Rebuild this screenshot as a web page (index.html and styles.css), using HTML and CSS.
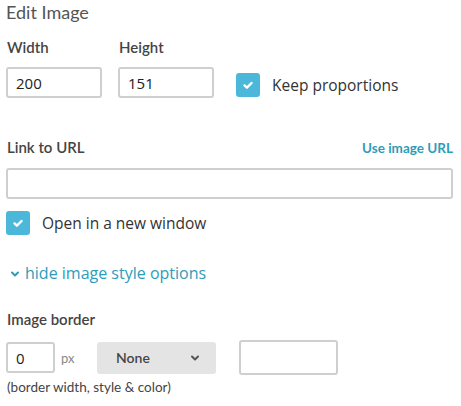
FILE: index.html
```html
<!DOCTYPE html>
<html>
<head>
<meta charset="utf-8">
<link rel="stylesheet" href="styles.css">
</head>
<body>
<div class="panel">
  <h1 class="title">Edit Image</h1>
  <div class="size-row">
    <div class="field">
      <label class="label">Width</label>
      <input class="input size-input" value="200">
    </div>
    <div class="field">
      <label class="label">Height</label>
      <input class="input size-input" value="151">
    </div>
    <div class="check keep">
      <span class="box"><svg width="14" height="14" viewBox="0 0 14 14"><path d="M3.5 7.4l2.4 2.3L10.6 5" fill="none" stroke="#fff" stroke-width="2.4" stroke-linecap="round" stroke-linejoin="round"/></svg></span>
      <span class="check-text">Keep proportions</span>
    </div>
  </div>

  <div class="link-head">
    <span class="label">Link to URL</span>
    <a class="use-url">Use image URL</a>
  </div>
  <input class="input url-input">
  <div class="check newwin">
    <span class="box"><svg width="14" height="14" viewBox="0 0 14 14"><path d="M3.5 7.4l2.4 2.3L10.6 5" fill="none" stroke="#fff" stroke-width="2.4" stroke-linecap="round" stroke-linejoin="round"/></svg></span>
    <span class="check-text">Open in a new window</span>
  </div>

  <div class="toggle">
    <svg class="chev" width="10" height="8" viewBox="0 0 10 8"><path d="M2 2.5l3 3 3-3" fill="none" stroke="#2e9cb9" stroke-width="2" stroke-linecap="round" stroke-linejoin="round"/></svg>
    <span>hide image style options</span>
  </div>

  <div class="label border-label">Image border</div>
  <div class="border-row">
    <input class="input bw-input" value="0">
    <span class="px">px</span>
    <div class="select">
      <span>None</span>
      <svg width="10" height="8" viewBox="0 0 10 8"><path d="M2 2.5l3 3 3-3" fill="none" stroke="#555" stroke-width="2" stroke-linecap="round" stroke-linejoin="round"/></svg>
    </div>
    <div class="color-box"></div>
  </div>
  <div class="hint">(border width, style &amp; color)</div>
</div>
</body>
</html>
```
FILE: styles.css
```css
* { box-sizing: border-box; }
body {
  margin: 0;
  background: #fff;
  font-family: Lato, "Open Sans", sans-serif;
  color: #444;
}
.panel {
  padding: 0 8px 0 6px;
}
.title {
  margin: 0;
  padding-top: 1px;
  font-size: 18px;
  font-weight: 400;
  line-height: 22px;
  color: #555;
}
.size-row {
  display: flex;
  align-items: flex-end;
  margin-top: 14px;
}
.field {
  display: flex;
  flex-direction: column;
  margin-right: 16px;
}
.label {
  font-size: 15px;
  font-weight: 600;
  line-height: 20px;
  color: #444;
  padding-left: 1px;
}
.field .label { margin-bottom: 10px; }
.input {
  border: 2px solid #cfcfcf;
  border-radius: 3px;
  height: 31px;
  font-family: "Open Sans", Lato, sans-serif;
  font-size: 15px;
  color: #222;
  padding: 0 8px;
  outline: none;
  background: #fff;
}
.size-input { width: 96px; }
.check {
  display: flex;
  align-items: center;
}
.keep { margin-left: 6px; margin-bottom: 1px; }
.box {
  width: 24px;
  height: 24px;
  border-radius: 3px;
  background: #4cb8d9;
  display: flex;
  align-items: center;
  justify-content: center;
  margin-right: 12px;
}
.check-text {
  font-family: "Open Sans", Lato, sans-serif;
  font-size: 15.5px;
  font-weight: 400;
  color: #333;
}
.link-head {
  display: flex;
  justify-content: space-between;
  align-items: baseline;
  margin-top: 39px;
}
.use-url {
  font-size: 13.5px;
  font-weight: 700;
  color: #2e9cb9;
}
.url-input {
  display: block;
  width: 447px;
  height: 31px;
  margin-top: 11px;
}
.newwin { margin-top: 12px; }
.toggle {
  display: flex;
  align-items: center;
  margin-top: 27px;
  font-family: "Open Sans", Lato, sans-serif;
  font-size: 16px;
  color: #2e9cb9;
  padding-left: 4px;
}
.chev { margin-right: 5px; margin-top: 2px; }
.border-label { margin-top: 25px; }
.border-row {
  display: flex;
  align-items: center;
  margin-top: 11px;
}
.bw-input {
  width: 49px;
  height: 31px;
}
.px {
  font-size: 13px;
  color: #888;
  margin-left: 6px;
  width: 36px;
}
.select {
  width: 119px;
  height: 32px;
  border-radius: 3px;
  background: #e4e4e4;
  display: flex;
  align-items: center;
  justify-content: space-between;
  padding: 0 16px 0 19px;
  font-size: 14px;
  font-weight: 600;
  color: #444;
}
.color-box {
  width: 99px;
  height: 35px;
  border: 2px solid #cfcfcf;
  border-radius: 3px;
  margin-left: 23px;
}
.hint {
  font-size: 13.5px;
  color: #444;
  margin-top: 4px;
  padding-left: 1px;
}
```
